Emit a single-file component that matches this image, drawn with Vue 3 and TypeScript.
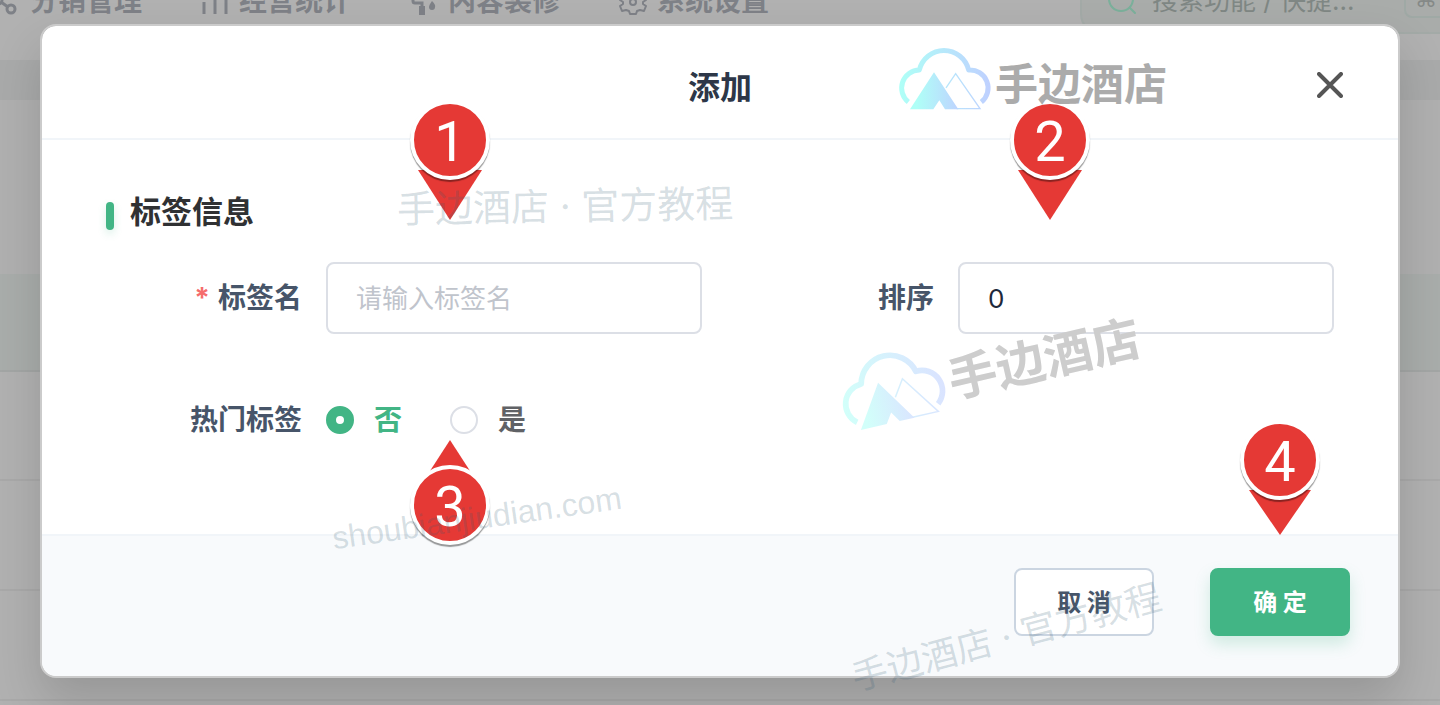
<script setup lang="ts">
import { ref } from 'vue'

interface Pin {
  n: number
  cls: string
  tail: string
}

const tagName = ref('')
const sort = ref('0')
const hot = ref('no')

// Tail polygons are drawn in a box whose centre (60, 90) is the badge centre.
const pins: Pin[] = [
  { n: 1, cls: 'pin-name', tail: '28,120 92,120 60,170' },
  { n: 2, cls: 'pin-sort', tail: '28,120 92,120 60,170' },
  { n: 3, cls: 'pin-hot', tail: '38,59 82,59 60,25' },
  { n: 4, cls: 'pin-ok', tail: '29,120 91,120 60,165' },
]

const brands = ['brand-top', 'brand-tilt']
const rows = ['row-title', 'row-head', 'row-tint', 'row-a', 'row-b', 'row-b']
</script>

<template>
  <div class="page">
    <div class="backdrop">
      <header class="topbar">
        <nav class="menu">
          <a href="#" class="menu-item">
            <svg viewBox="0 0 28 28" class="menu-icon">
              <g fill="none" stroke="currentColor" stroke-width="3">
                <circle cx="6" cy="13" r="4" />
                <circle cx="19" cy="4" r="4" />
                <circle cx="19" cy="22" r="4" />
                <path d="M9 15l7 5M9 11l7-5" />
              </g>
            </svg>
            分销管理
          </a>
          <a href="#" class="menu-item">
            <svg viewBox="0 0 28 28" class="menu-icon">
              <path d="M3 15v12M14 4v23M25 9v18" fill="none" stroke="currentColor" stroke-width="3" />
            </svg>
            经营统计
          </a>
          <a href="#" class="menu-item">
            <svg viewBox="0 0 28 28" class="menu-icon">
              <path d="M3 9v5q0 2 2 2h7v4" fill="none" stroke="currentColor" stroke-width="3" />
              <path d="M9 19h6v9h-6zM2 3h18v6H2zM22 14q4 4 3 6a3 3 0 0 1-6 0q0-2 3-6z" fill="currentColor" />
            </svg>
            内容装修
          </a>
          <a href="#" class="menu-item">
            <svg viewBox="0 0 28 28" class="menu-icon">
              <g fill="none" stroke="currentColor" stroke-width="2">
                <circle cx="14" cy="15" r="3" />
                <path d="M11 3h6l1 4 3 2 4-1 2 5-3 2v2l3 2-2 5-4-1-3 1-1 3h-6l-1-3-3-1-4 1-2-5 3-2v-2l-3-2 2-5 4 1 3-2z" stroke-linejoin="round" />
              </g>
            </svg>
            系统设置
          </a>
        </nav>
        <label class="search">
          <svg viewBox="0 0 32 32" class="search-icon">
            <path d="M24 24l5 5M27 15a12 12 0 1 1-24 0a12 12 0 0 1 24 0z" fill="none" stroke="currentColor" stroke-width="2" stroke-linecap="round" />
          </svg>
          <input type="text" placeholder="搜索功能 / 快捷..." aria-label="搜索功能" />
          <kbd>⌘</kbd>
        </label>
      </header>
      <div v-for="(r, i) in rows" :key="i" :class="['row', r]"></div>
    </div>

    <form class="dialog" role="dialog" aria-labelledby="dialog-title" @submit.prevent>
      <header class="dialog-head">
        <h1 id="dialog-title">添加</h1>
        <button type="button" class="close" aria-label="关闭">
          <svg viewBox="0 0 26 26">
            <path d="M2 2l22 22M24 2L2 24" fill="none" stroke="currentColor" stroke-width="4" stroke-linecap="round" />
          </svg>
        </button>
      </header>

      <div class="dialog-body">
        <h2>标签信息</h2>
        <div class="fields">
          <div class="field">
            <label for="tag-name"><span class="star">*</span>标签名</label>
            <input id="tag-name" v-model="tagName" class="text" type="text" placeholder="请输入标签名" />
          </div>
          <div class="field">
            <label for="sort">排序</label>
            <input id="sort" v-model="sort" class="text" type="text" />
          </div>
          <div class="field" role="radiogroup" aria-labelledby="hot-label">
            <span id="hot-label" class="field-label">热门标签</span>
            <div class="radios">
              <label class="radio"><input v-model="hot" type="radio" name="hot" value="no" /><span>否</span></label>
              <label class="radio"><input v-model="hot" type="radio" name="hot" value="yes" /><span>是</span></label>
            </div>
          </div>
        </div>
      </div>

      <footer class="dialog-foot">
        <button type="button" class="btn">取 消</button>
        <button type="submit" class="btn primary">确 定</button>
      </footer>
    </form>

    <div v-for="p in pins" :key="p.n" :class="['pin', p.cls]">
      <svg viewBox="0 0 120 180"><polygon :points="p.tail" fill="#e53935" /></svg>
      <span>{{ p.n }}</span>
    </div>

    <svg v-for="b in brands" :key="b" viewBox="0 0 290 80" :class="['brand', b]">
      <defs>
        <linearGradient :id="b + '-fill'" gradientUnits="userSpaceOnUse" x1="30" y1="0" x2="302" y2="0">
          <stop offset="0" class="stop-a" />
          <stop offset="1" class="stop-b" />
        </linearGradient>
        <linearGradient :id="b + '-tent'" gradientUnits="userSpaceOnUse" x1="80" y1="0" x2="215" y2="0">
          <stop offset="0" class="stop-a" />
          <stop offset="1" class="stop-b" />
        </linearGradient>
      </defs>
      <g transform="scale(0.3333)">
        <path d="M55 186A54 54 0 0 1 88 90A76 76 0 0 1 236 90A54 54 0 0 1 274 186" fill="none" :stroke="`url(#${b}-fill)`" stroke-width="15" stroke-linejoin="round" />
        <path d="M168 144L197 101L270 206H200" fill="none" :stroke="`url(#${b}-fill)`" stroke-width="4" />
        <path d="M132 97L60 208H130L148 181L165 208H205z" :fill="`url(#${b}-tent)`" />
      </g>
      <text x="105" y="60">手边酒店</text>
    </svg>

    <div class="mark mark-top">手边酒店 · 官方教程</div>
    <div class="mark mark-bottom">手边酒店 · 官方教程</div>
    <div class="mark mark-site">shoubianjiudian.com</div>
  </div>
</template>

<style>
body {
  background: #b1b1b1;
}
</style>

<style scoped>
.page {
  position: relative;
  box-sizing: border-box;
  min-height: 100vh;
  padding: 24px 40px 27px;
  overflow: hidden;
  background: #b1b1b1;
  font-family: Inter, "Noto Sans CJK SC", sans-serif;
}

.page *,
.page *::before {
  box-sizing: border-box;
}

button,
input {
  font-family: inherit;
}

.backdrop {
  position: absolute;
  inset: 0;
}

.topbar {
  display: flex;
  justify-content: space-between;
  height: 60px;
  margin: -26px -20px 0 -8px;
}

.menu {
  display: flex;
  align-items: center;
  gap: 59px;
  padding-bottom: 6px;
}

.menu-item {
  display: flex;
  align-items: center;
  gap: 10px;
  color: #7e8187;
  font-size: 28px;
  font-weight: 700;
  line-height: 40px;
  text-decoration: none;
}

.menu-icon {
  width: 28px;
  height: 28px;
}

.search {
  display: flex;
  align-items: center;
  width: 380px;
  padding: 0 10px 8px 24px;
  border: 2px solid #a3aaa7;
  border-radius: 20px;
  background: #a9acaa;
}

.search-icon {
  flex: none;
  width: 32px;
  height: 32px;
  color: #7bb09b;
}

.search input {
  flex: 1;
  min-width: 0;
  padding: 0 0 0 14px;
  border: 0;
  background: none;
  font-size: 26px;
}

.search input::placeholder {
  color: #7f8784;
  opacity: 1;
}

.search kbd {
  width: 44px;
  height: 36px;
  border: 2px solid #9fa9a5;
  border-radius: 8px;
  color: #858987;
  font: 22px/32px "DejaVu Sans", sans-serif;
  text-align: center;
}

.row {
  border-bottom: 2px solid #a9a9a9;
}

.row-title {
  height: 26px;
  border: 0;
}

.row-head {
  height: 40px;
  border: 0;
  background: #a9aaaa;
}

.row-tint {
  height: 272px;
  border-color: #a3a6a5;
  background: linear-gradient(#b0b0b0 174px, #a9adab 174px);
}

.row-a {
  height: 109px;
}

.row-b {
  height: 110px;
}

.dialog {
  position: relative;
  display: flex;
  flex-direction: column;
  border: 2px solid #cbcbcb;
  border-radius: 16px;
  background: #fff;
  background-clip: padding-box;
  box-shadow: 0 24px 48px rgba(0, 0, 0, 0.15);
}

.dialog-head {
  display: grid;
  grid-template-columns: 1fr auto 1fr;
  align-items: center;
  min-height: 114px;
  padding: 12px 48px 0;
  border-bottom: 2px solid #f1f5f9;
}

h1 {
  grid-column: 2;
  margin: 0;
  color: #2d3748;
  font-size: 32px;
  font-weight: 700;
  line-height: 48px;
}

.close {
  display: flex;
  align-items: center;
  justify-content: center;
  justify-self: end;
  width: 40px;
  height: 48px;
  padding: 0 0 6px;
  border: 0;
  background: none;
  color: #555;
}

.close svg {
  width: 26px;
  height: 26px;
}

.dialog-body {
  padding: 52px 64px 78px;
}

h2 {
  display: flex;
  align-items: center;
  gap: 16px;
  margin: 0 0 30px;
  color: #303133;
  font-size: 31px;
  font-weight: 700;
  line-height: 40px;
}

h2::before {
  width: 8px;
  height: 28px;
  margin-top: 8px;
  border-radius: 4px;
  background: #42b585;
  box-shadow: 0 4px 8px rgba(66, 181, 133, 0.2);
  content: "";
}

.fields {
  display: grid;
  grid-template-columns: 1fr 1fr;
  gap: 50px 36px;
}

.field {
  display: grid;
  grid-template-columns: 220px 1fr;
  align-items: center;
  min-height: 72px;
}

.field > label,
.field-label {
  padding-right: 24px;
  color: #475569;
  font-size: 28px;
  font-weight: 700;
  line-height: 40px;
  text-align: right;
}

.star {
  margin-right: 8px;
  color: #f56c6c;
}

.text {
  width: 100%;
  height: 72px;
  padding: 0 28px;
  border: 2px solid #dcdfe6;
  border-radius: 8px;
  background: #fff;
  color: #1e293b;
  font-size: 26px;
}

.text::placeholder {
  color: #c0c4cc;
  opacity: 1;
}

.radios {
  display: flex;
  gap: 48px;
}

.radio {
  display: flex;
  align-items: center;
  gap: 20px;
  color: #606266;
  font-size: 28px;
  font-weight: 700;
  line-height: 40px;
}

.radio input {
  width: 28px;
  height: 28px;
  margin: 0;
  border: 2px solid #dcdfe6;
  border-radius: 50%;
  background: #fff;
  appearance: none;
}

.radio input:checked {
  border: 10px solid #42b585;
}

.radio input:checked + span {
  color: #42b585;
}

.dialog-foot {
  display: flex;
  justify-content: flex-end;
  gap: 56px;
  padding: 32px 48px 40px;
  border-top: 2px solid #f1f5f9;
  border-radius: 0 0 14px 14px;
  background: #f8fafc;
}

.btn {
  width: 140px;
  height: 68px;
  padding: 0 0 4px;
  border: 2px solid #cbd5e1;
  border-radius: 8px;
  background: #fff;
  color: #475569;
  font-size: 24px;
  font-weight: 700;
}

.btn.primary {
  border-color: #42b585;
  background: #42b585;
  box-shadow: 0 8px 16px rgba(66, 181, 133, 0.22);
  color: #fff;
}

/* Numbered callouts pinned over the dialog */
.pin {
  position: absolute;
  width: 120px;
  height: 180px;
}

.pin svg {
  display: block;
  width: 120px;
  height: 180px;
}

.pin span {
  position: absolute;
  top: 50px;
  left: 20px;
  width: 80px;
  height: 80px;
  border: 4px solid #fff;
  border-radius: 50%;
  background: #e53935;
  box-shadow: 0 2px 1px rgba(0, 0, 0, 0.4);
  color: #fff;
  font: 56px/76px Roboto, Arial, sans-serif;
  text-align: center;
}

.pin-name {
  top: 50px;
  left: 390px;
}

.pin-sort {
  top: 50px;
  left: 990px;
}

.pin-hot {
  top: 415px;
  left: 390px;
}

.pin-ok {
  top: 370px;
  left: 1220px;
}

/* Brand and text watermarks */
.brand,
.mark {
  position: absolute;
  pointer-events: none;
}

.brand text {
  font: 700 43px "Noto Sans CJK SC", sans-serif;
}

.brand-top {
  top: 40px;
  left: 890px;
  width: 290px;
  --from: #affff7;
  --to: #bfd0ff;
  fill: #ababab;
}

.brand-tilt {
  top: 320px;
  left: 827px;
  width: 330px;
  transform: rotate(-13deg);
  --from: #d2fffa;
  --to: #dae3ff;
  fill: #cdcdcd;
}

.stop-a {
  stop-color: var(--from);
}

.stop-b {
  stop-color: var(--to);
}

.mark {
  color: rgba(50, 90, 115, 0.2);
  font-size: 38px;
  line-height: 48px;
  white-space: nowrap;
}

.mark-top {
  top: 182px;
  left: 397px;
  transform: rotate(-1deg);
}

.mark-bottom {
  top: 613px;
  left: 847px;
  font-size: 36px;
  transform: rotate(-15deg);
}

.mark-site {
  top: 494px;
  left: 331px;
  font-family: "Liberation Sans", Arial, sans-serif;
  font-size: 32px;
  transform: rotate(-8deg);
}
</style>
